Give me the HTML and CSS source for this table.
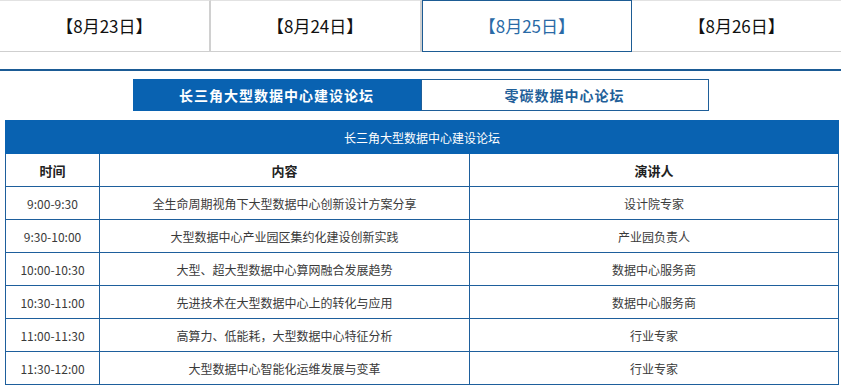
FILE: index.html
```html
<!DOCTYPE html>
<html lang="zh-CN">
<head>
<meta charset="utf-8">
<link rel="stylesheet" href="styles.css">
</head>
<body>
<div class="days">
  <div class="day">【8月23日】</div>
  <div class="day">【8月24日】</div>
  <div class="day active">【8月25日】</div>
  <div class="day last">【8月26日】</div>
</div>
<div class="rule"></div>
<div class="forums">
  <div class="forum on">长三角大型数据中心建设论坛</div>
  <div class="forum">零碳数据中心论坛</div>
</div>
<table class="agenda">
  <colgroup><col class="c1"><col class="c2"><col class="c3"></colgroup>
  <tr><th colspan="3" class="title">长三角大型数据中心建设论坛</th></tr>
  <tr class="head"><td>时间</td><td>内容</td><td>演讲人</td></tr>
  <tr><td>9:00-9:30</td><td>全生命周期视角下大型数据中心创新设计方案分享</td><td>设计院专家</td></tr>
  <tr><td>9:30-10:00</td><td>大型数据中心产业园区集约化建设创新实践</td><td>产业园负责人</td></tr>
  <tr><td>10:00-10:30</td><td>大型、超大型数据中心算网融合发展趋势</td><td>数据中心服务商</td></tr>
  <tr><td>10:30-11:00</td><td>先进技术在大型数据中心上的转化与应用</td><td>数据中心服务商</td></tr>
  <tr><td>11:00-11:30</td><td>高算力、低能耗，大型数据中心特征分析</td><td>行业专家</td></tr>
  <tr><td>11:30-12:00</td><td>大型数据中心智能化运维发展与变革</td><td>行业专家</td></tr>
</table>
</body>
</html>
```
FILE: styles.css
```css
html, body {
  margin: 0;
  padding: 0;
  background: #fff;
  font-family: "Noto Sans CJK SC", "Noto Sans", sans-serif;
  color: #333;
}
.days {
  display: flex;
  height: 52px;
  box-sizing: border-box;
}
.day {
  flex: 1;
  display: flex;
  align-items: center;
  justify-content: center;
  font-size: 17px;
  color: #111;
  border-top: 1px solid #e2e2e2;
  border-right: 2px solid #d0d0d0;
  border-bottom: 1px solid #cfcfcf;
  box-sizing: border-box;
  padding-bottom: 1px;
}
.day.last { border-right: none; }
.day.active {
  color: #2a6aa6;
  border: 1px solid #1d5c94;
  border-bottom: 1px solid #1d5c94;
}
.rule {
  margin-top: 17px;
  border-top: 2px solid #1b5b95;
}
.forums {
  display: flex;
  justify-content: center;
  margin-top: 8px;
}
.forum {
  width: 288px;
  height: 32px;
  box-sizing: border-box;
  display: flex;
  align-items: center;
  justify-content: center;
  font-size: 14px;
  font-weight: bold;
  color: #1f5f99;
  border: 1px solid #1f5f99;
  letter-spacing: 1px;
}
.forum.on {
  background: #0962b1;
  border-color: #0962b1;
  color: #fff;
}
.agenda {
  margin: 9px 0 0 5px;
  width: 833px;
  border-collapse: collapse;
  table-layout: fixed;
  font-size: 12px;
}
.c1 { width: 94px; }
.c2 { width: 370px; }
.c3 { width: 369px; }
.agenda td, .agenda th {
  border: 1px solid #1e5f9c;
  height: 32px;
  padding: 0;
  text-align: center;
  color: #3a3a3a;
  font-weight: normal;
}
.agenda th.title {
  background: #0962b1;
  color: #fff;
  font-size: 12px;
  border-color: #0962b1;
}
.agenda tr.head td {
  font-size: 13px;
  font-weight: bold;
  color: #222;
}
```
